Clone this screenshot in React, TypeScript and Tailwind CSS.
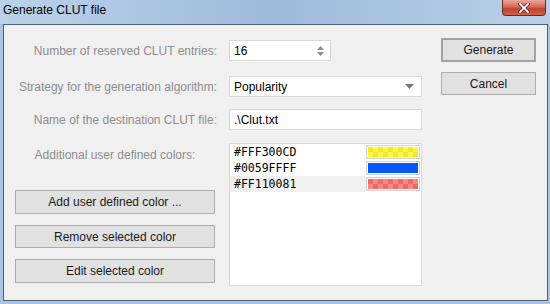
import React from "react";

const colors = [
  { hex: "#FFF300CD", light: "#fff53a", dark: "#f2e72c", selected: false },
  { hex: "#0059FFFF", light: "#0059ff", dark: "#0059ff", selected: false },
  { hex: "#FF110081", light: "#ff847e", dark: "#e86d68", selected: true },
];

function Swatch({ light, dark }: { light: string; dark: string }) {
  return (
    <div className="w-[54px] h-[14px] border border-[#d2d2d2] bg-white p-[1px]">
      <svg width="50" height="10" className="block">
        {Array.from({ length: 10 }).map((_, i) =>
          [0, 1].map((j) => (
            <rect
              key={`${i}-${j}`}
              x={i * 5}
              y={j * 5}
              width="5"
              height="5"
              fill={(i + j) % 2 === 0 ? dark : light}
            />
          ))
        )}
      </svg>
    </div>
  );
}

function Btn({ label, primary }: { label: string; primary?: boolean }) {
  return (
    <div
      className={`flex items-center justify-center bg-[#e1e1e1] text-[12px] text-[#1a1a1a] ${
        primary ? "border-2 border-[#a3a3a3]" : "border border-[#adadad]"
      }`}
    >
      {label}
    </div>
  );
}

export default function App() {
  return (
    <div className="w-[550px] h-[304px] flex flex-col bg-[#a9c4e2] font-['Segoe_UI','Liberation_Sans',sans-serif] overflow-hidden">
      {/* title bar */}
      <div className="relative h-[24px] shrink-0 bg-[linear-gradient(to_right,#bbd1e9,#9ebbda_50%,#b9d0e8)]">
        <div className="pl-[3px] leading-[20px] text-[12px] text-black">Generate CLUT file</div>
        <div className="absolute right-[4px] top-0 w-[44px] h-[16px] rounded-b-[4px] border border-t-0 border-[#6e2a22] bg-[linear-gradient(to_bottom,#e8a89d,#d26a5a_45%,#c2412f_60%,#d0614c)] flex items-center justify-center">
          <svg width="12" height="10" viewBox="0 0 12 10">
            <path d="M2 1 L10 9 M10 1 L2 9" stroke="#5a2420" strokeWidth="3.4" strokeLinecap="square" />
            <path d="M2 1 L10 9 M10 1 L2 9" stroke="#ffffff" strokeWidth="1.8" strokeLinecap="square" />
          </svg>
        </div>
      </div>

      {/* client area */}
      <div className="ml-[3px] mr-[2px] h-[277px] shrink-0 border border-[#4f6074] bg-[#f0f0f0] flex pl-[11px]">
        <div className="flex flex-col pt-[15px] w-[407px]">
          <div className="flex items-center h-[21px]">
            <div className="w-[202px] mr-[12px] text-right text-[12px] text-[#8d8d8d]">Number of reserved CLUT entries:</div>
            <div className="w-[102px] h-[21px] border border-[#d9d9d9] bg-white flex items-center pl-[4px] text-[12px] text-black">
              <span className="flex-1">16</span>
              <svg width="9" height="12" viewBox="0 0 9 12" className="mr-[5px]">
                <path d="M1 5 L4.5 1 L8 5 Z" fill="#8a8a8a" />
                <path d="M1 7 L4.5 11 L8 7 Z" fill="#8a8a8a" />
              </svg>
            </div>
          </div>
          <div className="flex items-center h-[21px] mt-[15px]">
            <div className="w-[202px] mr-[12px] text-right text-[12px] text-[#8d8d8d]">Strategy for the generation algorithm:</div>
            <div className="w-[193px] h-[21px] border border-[#d9d9d9] bg-white flex items-center pl-[4px] text-[12px] text-black">
              <span className="flex-1">Popularity</span>
              <svg width="9" height="5" viewBox="0 0 9 5" className="mr-[7px]">
                <path d="M0 0 L9 0 L4.5 5 Z" fill="#777777" />
              </svg>
            </div>
          </div>
          <div className="flex items-center h-[21px] mt-[12px]">
            <div className="w-[202px] mr-[12px] text-right text-[12px] text-[#8d8d8d]">Name of the destination CLUT file:</div>
            <div className="w-[193px] h-[21px] border border-[#d9d9d9] bg-white flex items-center pl-[4px] text-[12px] text-black">
              .\Clut.txt
            </div>
          </div>

          <div className="flex mt-[13px]">
            <div className="w-[202px] mr-[12px] flex flex-col">
              <div className="w-[200px] mt-[4px] leading-[16px] text-center text-[12px] text-[#8d8d8d]">Additional user defined colors:</div>
              <div className="w-[200px] mt-[27px] grid grid-rows-[24px_23px_24px] gap-[11px]">
                <Btn label="Add user defined color ..." />
                <Btn label="Remove selected color" />
                <Btn label="Edit selected color" />
              </div>
            </div>
            <div className="w-[193px] h-[143px] border border-[#d9d9d9] bg-white flex flex-col">
              {colors.map((c) => (
                <div key={c.hex} className="flex h-[16px] items-center">
                  <div
                    className={`w-[136px] h-[16px] pl-[4px] leading-[16px] text-[11.5px] text-black font-['DejaVu_Sans_Mono',monospace] ${
                      c.selected ? "bg-[#f0f0f0]" : ""
                    }`}
                  >
                    {c.hex}
                  </div>
                  <Swatch light={c.light} dark={c.dark} />
                </div>
              ))}
            </div>
          </div>
        </div>

        <div className="ml-[19px] pt-[13px] w-[95px] grid grid-rows-[24px_23px] gap-[10px] content-start">
          <Btn label="Generate" primary />
          <Btn label="Cancel" />
        </div>
      </div>
    </div>
  );
}
